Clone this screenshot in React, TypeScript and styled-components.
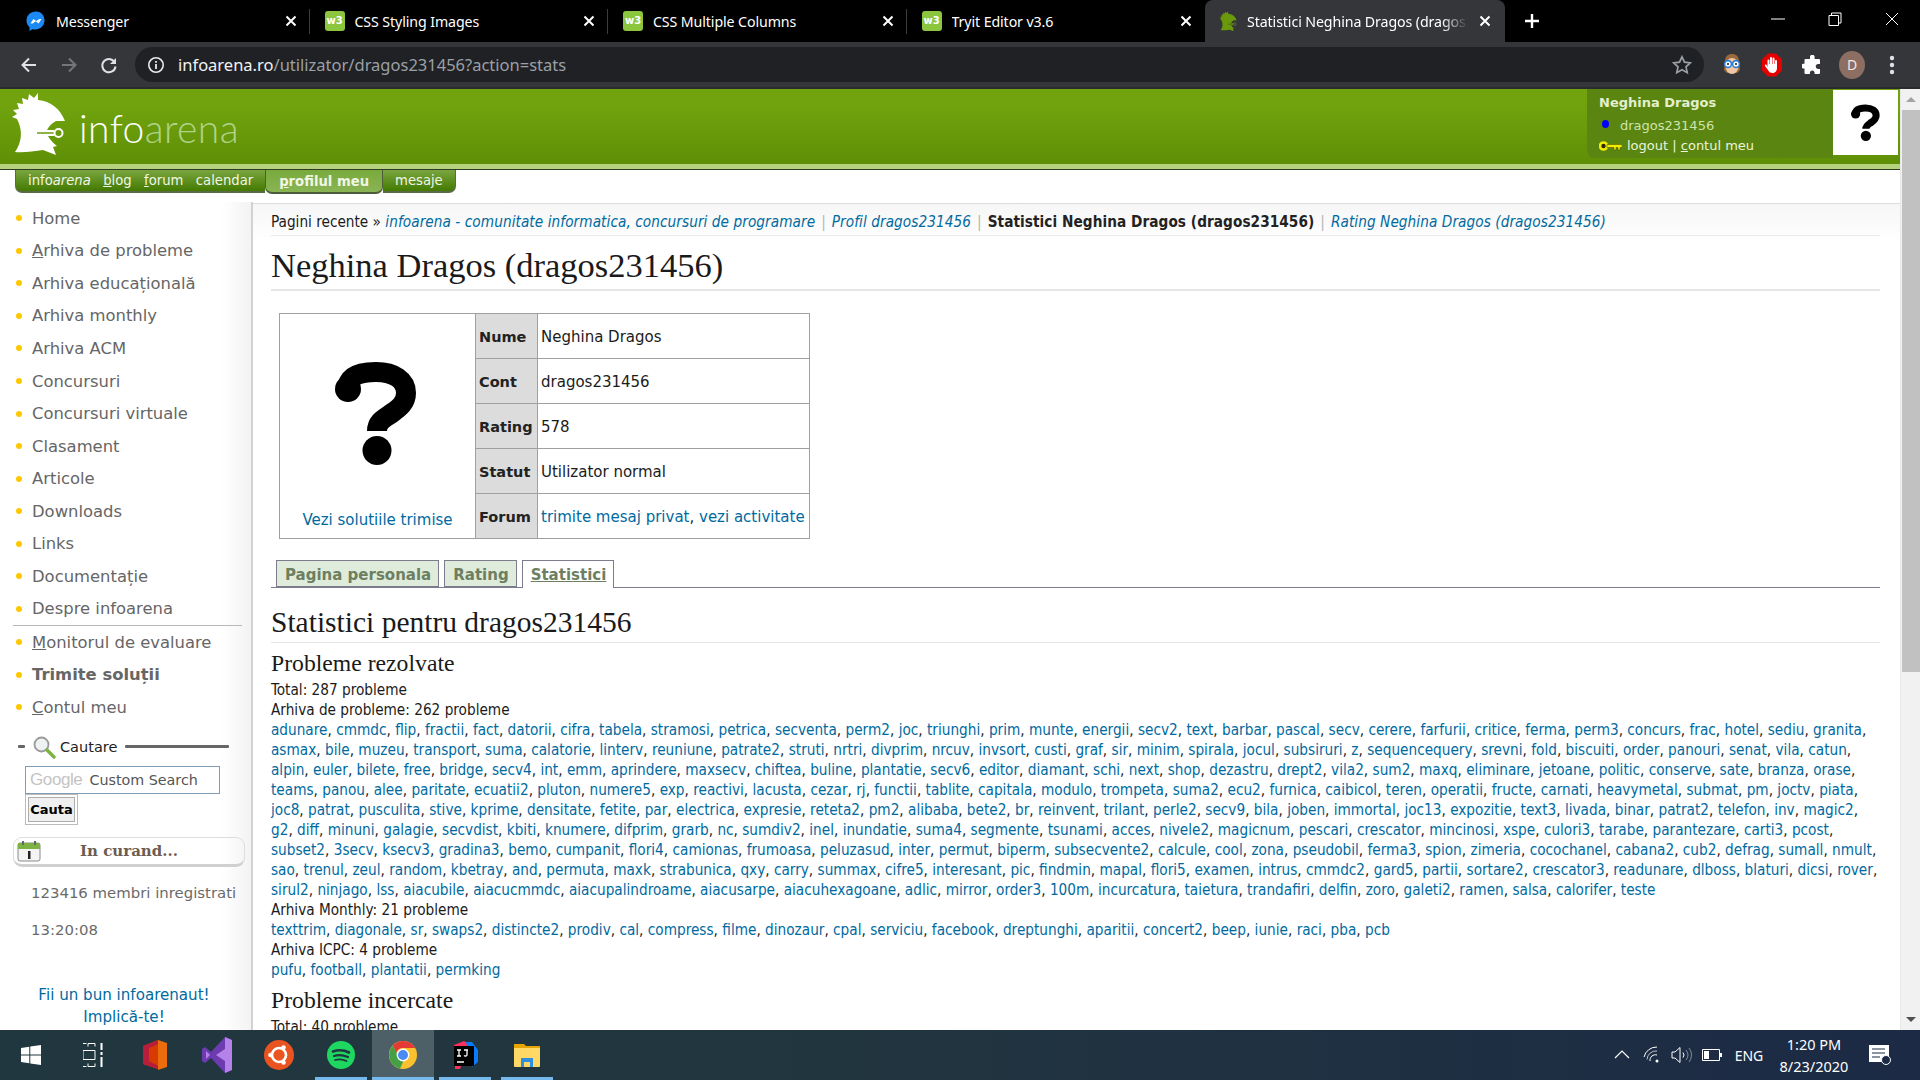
import React from "react";
import styled, { createGlobalStyle } from "styled-components";

const GlobalStyle = createGlobalStyle`
  html, body {
    margin: 0;
    padding: 0;
    height: 100%;
    overflow: hidden;
    background: #fff;
  }
  * { box-sizing: border-box; }
`;

const UI_FONT = `"Noto Sans", "Open Sans", sans-serif`;
const VERDANA = `"DejaVu Sans", Verdana, sans-serif`;
const SERIF = `"Liberation Serif", Georgia, serif`;

const Shell = styled.div`
  width: 1920px;
  height: 1080px;
  display: flex;
  flex-direction: column;
  overflow: hidden;
`;

/* browser chrome */
const TabStrip = styled.div`
  height: 42px;
  flex: none;
  background: #000;
  display: flex;
  align-items: stretch;
  padding-left: 11px;
  font-family: ${UI_FONT};
  font-size: 14px;
  color: #fff;
`;

const Tab = styled.div<{ $active?: boolean }>`
  width: ${p => (p.$active ? "300px" : "298.5px")};
  height: 42px;
  display: flex;
  align-items: center;
  padding: 0 ${p => (p.$active ? "13px" : "12px")} 0 ${p => (p.$active ? "14px" : "15px")};
  gap: 10px;
  background: ${p => (p.$active ? "#35363a" : "transparent")};
  border-radius: ${p => (p.$active ? "8px 8px 0 0" : "0")};
  position: relative;
  ${p =>
    !p.$active &&
    `&::after {
      content: "";
      position: absolute;
      right: 0;
      top: 9px;
      height: 25px;
      width: 1px;
      background: #3d3d3d;
    }`}
  &:nth-child(4)::after {
    display: none;
  }
`;

const TabTitle = styled.span<{ $fade?: boolean }>`
  flex: 1;
  white-space: nowrap;
  overflow: hidden;
  font-size: 14.2px;
  letter-spacing: -0.1px;
  ${p =>
    p.$fade &&
    `-webkit-mask-image: linear-gradient(90deg, #000 88%, transparent 100%);
     mask-image: linear-gradient(90deg, #000 88%, transparent 100%);`}
`;

const W3Icon = styled.span`
  width: 20px;
  height: 20px;
  flex: none;
  border-radius: 3px;
  background: #8cc63f;
  color: #fff;
  font: bold 10px/20px ${VERDANA};
  text-align: center;
`;

const NewTab = styled.div`
  width: 54px;
  display: flex;
  align-items: center;
  justify-content: center;
`;

const WindowButtons = styled.div`
  margin-left: auto;
  display: flex;
  align-items: flex-start;
`;

const WindowButton = styled.div`
  width: 57px;
  height: 38px;
  display: flex;
  align-items: center;
  justify-content: center;
`;

const Toolbar = styled.div`
  height: 47px;
  flex: none;
  background: #35363a;
  border-bottom: 2px solid #2a2b2e;
  display: flex;
  align-items: flex-start;
  padding: 5px 0 0 9px;
`;

const NavIcon = styled.div`
  width: 39px;
  height: 35px;
  margin-right: 1px;
  display: flex;
  align-items: center;
  justify-content: center;
`;

const Omnibox = styled.div`
  width: 1569px;
  height: 35px;
  margin: 0 8px 0 6px;
  border-radius: 18px;
  background: #202124;
  display: flex;
  align-items: center;
  padding: 0 12px;
  font-family: ${UI_FONT};
  font-size: 16.5px;
  color: #9aa0a6;
`;

const UrlHost = styled.span`
  color: #f1f3f4;
`;

const Url = styled.div`
  flex: 1;
  margin-left: 13px;
  white-space: nowrap;
`;

const ExtIcon = styled.div`
  width: 40px;
  height: 35px;
  display: flex;
  align-items: center;
  justify-content: center;
`;

const Avatar = styled.div`
  width: 26px;
  height: 28px;
  border-radius: 50%;
  background: #8d6e63;
  color: #f1e9e6;
  font: 14px/28px ${UI_FONT};
  text-align: center;
`;

/* page */
const Viewport = styled.div`
  flex: 1;
  min-height: 0;
  display: flex;
`;

const Scrollbar = styled.div`
  width: 20px;
  flex: none;
  background: #f1f1f1;
  display: flex;
  flex-direction: column;
  align-items: center;
  border-left: 1px solid #e8e8e8;
`;

const ScrollArrow = styled.div<{ $down?: boolean }>`
  height: 21px;
  flex: none;
  width: 100%;
  display: flex;
  align-items: center;
  justify-content: center;
  &::after {
    content: "";
    border-left: 5px solid transparent;
    border-right: 5px solid transparent;
    ${p =>
      p.$down
        ? "border-top: 5px solid #505050;"
        : "border-bottom: 5px solid #a3a3a3;"}
  }
`;

const ScrollThumb = styled.div`
  width: 18px;
  height: 562px;
  flex: none;
  background: #c1c1c1;
`;

const ScrollTrack = styled.div`
  flex: 1;
`;

const Page = styled.div`
  flex: 1;
  min-width: 0;
  display: flex;
  flex-direction: column;
  background: #fff;
  overflow: hidden;
`;

const Header = styled.div`
  height: 81px;
  flex: none;
  display: flex;
  justify-content: space-between;
  background: linear-gradient(#70a30e 0, #70a30e 20%, #5f8f06 92.5%, #b5d27f 92.5%, #b5d27f 98.7%, #2f3a20 98.7%);
`;

const LogoLink = styled.div`
  display: flex;
  align-items: flex-start;
  padding: 3px 0 0 10px;
`;

const LogoText = styled.div`
  margin: 16px 0 0 13px;
  font-family: Lato, sans-serif;
  font-weight: 300;
  font-size: 39px;
  line-height: 40px;
  color: #fff;
  letter-spacing: 0.4px;
`;

const LogoArena = styled.span`
  color: #b0d38a;
`;

const UserBlock = styled.div`
  display: flex;
  align-items: flex-start;
  padding-right: 2px;
`;

const UserInfo = styled.div`
  width: 246px;
  height: 69px;
  background: #5a8510;
  border-radius: 0 0 0 8px;
  padding: 4px 0 0 12px;
  font-family: ${VERDANA};
  font-size: 13px;
  line-height: 20px;
  color: #cfe3ad;
`;

const UserName = styled.div`
  font-weight: bold;
  color: #e3efcd;
  margin-bottom: 3px;
`;

const UserRow = styled.div`
  display: flex;
  align-items: center;
  gap: 5px;
  height: 20px;
  white-space: nowrap;
`;

const StatusDot = styled.span`
  width: 7px;
  height: 8px;
  margin: -4px 6px 0 3px;
  border-radius: 50%;
  background: #00f;
`;

const HeaderLink = styled.span`
  color: #eaf4d8;
`;

const UserPhoto = styled.div`
  width: 65px;
  height: 65px;
  margin-top: 1px;
  background: #fff;
  display: flex;
  align-items: center;
  justify-content: center;
`;

const NavBar = styled.div`
  height: 33px;
  flex: none;
  padding-left: 15px;
  display: flex;
  align-items: flex-start;
  font-family: ${VERDANA};
  font-size: 13.2px;
  color: #fff;
`;

const NavGroup = styled.div<{ $active?: boolean; $last?: boolean; $first?: boolean }>`
  height: ${p => (p.$active ? "24px" : "23px")};
  display: flex;
  align-items: center;
  gap: 12.4px;
  padding: 0 ${p => (p.$active ? "13px" : p.$last ? "12px" : "12px")};
  background: ${p =>
    p.$active
      ? "linear-gradient(#78aa3c, #8ab454)"
      : "linear-gradient(#7aa540, #437a00)"};
  border: 1px solid #3c4a2c;
  border-top: 0;
  border-left-width: ${p => (p.$last ? "0" : "1px")};
  border-right-width: ${p => (p.$first ? "0" : "1px")};
  border-bottom-width: 2px;
  border-color: ${p => (p.$active ? "#4e5c3e" : "#5a6a46")};
  border-radius: ${p =>
    p.$first ? "0 0 0 7px" : p.$last ? "0 0 7px 0" : "0 0 7px 7px"};
  font-weight: ${p => (p.$active ? "bold" : "normal")};
  color: #f1f6e6;
  white-space: nowrap;
`;

const Body = styled.div`
  flex: 1;
  min-height: 0;
  display: flex;
  margin-top: -1px;
`;

const Sidebar = styled.div`
  width: 253px;
  flex: none;
  border-right: 2px solid #d2d2d2;
  background: linear-gradient(90deg, #fff 88%, #f3f3f3 100%);
  padding: 0 0 0 13px;
  font-family: ${VERDANA};
  font-size: 16.4px;
  color: #666;
`;

const MenuList = styled.ul`
  list-style: none;
  margin: 0;
  padding: 0;
  width: 229px;
`;

const MenuItem = styled.li<{ $strong?: boolean }>`
  height: 32.55px;
  display: flex;
  align-items: center;
  gap: 10px;
  padding-left: 3px;
  font-weight: ${p => (p.$strong ? "bold" : "normal")};
  white-space: nowrap;
  &::before {
    content: "";
    flex: none;
    width: 6px;
    height: 6px;
    border-radius: 50%;
    background: #ffc800;
  }
`;

const MenuDivider = styled.div`
  width: 229px;
  height: 1px;
  background: #b8b8b8;
`;

const SearchTitle = styled.div`
  display: flex;
  align-items: center;
  height: 24px;
  margin: 11px 0 7px 5px;
  font-size: 14.5px;
  color: #222;
`;

const Dash = styled.span<{ $w: number }>`
  width: ${p => p.$w}px;
  height: 3px;
  background: #666;
  border-radius: 1px;
`;

const Glass = styled.svg`
  margin-left: 7px;
`;

const SearchLabel = styled.span`
  margin: 0 8px 0 4px;
`;

const SearchBox = styled.div`
  width: 195px;
  height: 28px;
  margin-left: 12px;
  border: 1px solid #7f9db9;
  display: flex;
  align-items: center;
  padding-left: 4px;
  font-family: ${VERDANA};
  font-size: 14.3px;
  color: #555;
  white-space: nowrap;
`;

const GoogleMark = styled.span`
  font-family: "Liberation Sans", sans-serif;
  font-size: 17px;
  color: #c4c4c4;
  margin-right: 7px;
  letter-spacing: -0.4px;
`;

const SearchButtonWrap = styled.div`
  width: 53px;
  height: 31px;
  margin-left: 12px;
  border: 1px solid #bbb;
  padding: 2px;
`;

const SearchButton = styled.div`
  height: 100%;
  border: 1px solid #adadad;
  background: #f0f0f0;
  font: bold 13px/23px ${VERDANA};
  color: #000;
  text-align: center;
  white-space: nowrap;
  overflow: hidden;
`;

const SoonBox = styled.div`
  width: 232px;
  height: 30px;
  margin-top: 12px;
  border: 1px solid #ddd;
  border-bottom: 3px solid #d0d0d0;
  border-radius: 9px;
  display: flex;
  align-items: center;
  padding-left: 2px;
`;

const SoonLabel = styled.span`
  flex: 1;
  padding-right: 28px;
  text-align: center;
  font-family: "DejaVu Serif", ${SERIF};
  font-size: 15px;
  font-weight: bold;
  color: #6d5c50;
`;

const Counter = styled.div<{ $top: number }>`
  margin: ${p => p.$top}px 0 0 18px;
  font-size: 14.9px;
  line-height: 20px;
  color: #6a6a6a;
  white-space: nowrap;
`;

const Slogan = styled.div`
  margin-top: 44px;
  width: 222px;
  text-align: center;
  font-size: 15.1px;
  line-height: 22.5px;
  color: #006a9f;
`;

const Main = styled.div`
  flex: 1;
  min-width: 0;
  padding: 0 20px 0 18px;
  margin-top: 1px;
  border-top: 1px solid #ddd;
  background: linear-gradient(#f6f6f6, #fff 38px);
  font-family: ${VERDANA};
  color: #1b1b1b;
`;

const Breadcrumb = styled.div`
  height: 32px;
  line-height: 36px;
  border-bottom: 1px solid #eaeaea;
  font-stretch: condensed;
  font-size: 15.2px;
  white-space: nowrap;
`;

const CrumbLink = styled.span`
  font-style: italic;
  color: #006a9f;
  letter-spacing: 0.07px;
`;

const CrumbSep = styled.span`
  color: #b5b5b5;
  margin: 0 6px;
`;

const CrumbCurrent = styled.b`
  color: #222;
  letter-spacing: 0.06px;
`;

const PageTitle = styled.h1`
  margin: 0;
  height: 55px;
  line-height: 59px;
  font-family: ${SERIF};
  font-weight: normal;
  font-size: 34.5px;
  color: #1a1a1a;
  border-bottom: 2px solid #e6e6e6;
  white-space: nowrap;
`;

const ProfileTable = styled.table`
  margin: 22px 0 0 8px;
  border-collapse: collapse;
  table-layout: fixed;
  width: 531px;
  height: 226px;
  font-size: 15px;
  td, th {
    border: 1px solid #a0a0a0;
  }
`;

const PhotoCell = styled.td`
  width: 196px;
  padding: 47px 3px 0 0;
  text-align: center;
  vertical-align: top;
`;

const BigPhoto = styled.div`
  height: 113px;
  display: flex;
  justify-content: center;
`;

const PhotoLink = styled.div`
  margin: 37px -3px 0 0;
  color: #006a9f;
  white-space: nowrap;
`;

const LabelCell = styled.th`
  width: 62px;
  padding: 2px 0 0 3px;
  text-align: left;
  background: #dcdcdc;
  font-size: 14.5px;
  color: #222;
`;

const ValueCell = styled.td`
  padding: 2px 3px 0;
  white-space: nowrap;
`;

const CellLink = styled.span`
  color: #006a9f;
`;

const Tabs = styled.div`
  height: 28px;
  margin-top: 21px;
  padding-left: 5px;
  display: flex;
  gap: 5px;
  border-bottom: 1px solid #7c7c8c;
  font-size: 15px;
  font-weight: bold;
`;

const TabLink = styled.div<{ $active?: boolean }>`
  height: ${p => (p.$active ? "28px" : "27px")};
  padding: 0 7px 0 8px;
  line-height: 29px;
  border: 1px solid #7c7c8c;
  border-bottom: ${p => (p.$active ? "0" : "1px solid #7c7c8c")};
  background: ${p => (p.$active ? "#fff" : "#dfecdc")};
  color: #6d7f60;
  text-decoration: ${p => (p.$active ? "underline" : "none")};
  white-space: nowrap;
`;

const SectionTitle = styled.h2`
  margin: 16px 0 0;
  height: 39px;
  line-height: 37px;
  font-family: ${SERIF};
  font-weight: normal;
  font-size: 29.5px;
  color: #1a1a1a;
  border-bottom: 1px solid #e6e6e6;
`;

const SubTitle = styled.h3<{ $top: number }>`
  margin: ${p => p.$top}px 0 0;
  height: 26px;
  line-height: 26px;
  font-family: ${SERIF};
  font-weight: normal;
  font-size: 23.7px;
  color: #1a1a1a;
`;

const Line = styled.div<{ $top?: number }>`
  height: 20px;
  margin-top: ${p => p.$top || 0}px;
  line-height: 20px;
  font-stretch: condensed;
  font-size: 15.2px;
  white-space: nowrap;
  color: #1b1b1b;
`;

const ProblemLink = styled.span`
  color: #006a9f;
`;

/* taskbar */
const Taskbar = styled.div`
  height: 50px;
  flex: none;
  display: flex;
  align-items: stretch;
  background: linear-gradient(90deg, #21373f 0, #21353f 45%, #1c2a45 100%);
  color: #fff;
  font-family: ${UI_FONT};
`;

const TaskSlot = styled.div<{ $running?: boolean; $focus?: boolean }>`
  width: 62px;
  position: relative;
  display: flex;
  align-items: center;
  justify-content: center;
  background: ${p => (p.$focus ? "#4d6068" : "transparent")};
  ${p =>
    p.$running &&
    `&::after {
      content: "";
      position: absolute;
      left: 5px;
      right: 5px;
      bottom: 0;
      height: 3px;
      background: #76b9ed;
    }`}
  ${p => p.$focus && `&::after { left: 0; right: 0; }`}
`;

const Tray = styled.div`
  margin-left: auto;
  display: flex;
  align-items: center;
`;

const TrayIcon = styled.div`
  width: 30px;
  display: flex;
  justify-content: center;
`;

const TrayLang = styled.div`
  width: 38px;
  margin-left: 3px;
  font-size: 14px;
  text-align: center;
`;

const Clock = styled.div`
  width: 92px;
  font-size: 14.5px;
  line-height: 22px;
  text-align: center;
`;

const Notify = styled.div`
  width: 40px;
  margin-right: 20px;
  display: flex;
  justify-content: center;
`;

const QuestionMark: React.FC<{ w: number; h: number }> = ({ w, h }) => (
  <svg width={w} height={h} viewBox="0 0 82 104">
    <path
      d="M12 30C12 15 24 11 41 11c18 0 30 8 30 21 0 10-7 15-14 20-7 5-15 8-15 18"
      fill="none"
      stroke="#000"
      strokeWidth="20"
    />
    <circle cx="13" cy="28" r="13" fill="#000" />
    <circle cx="42" cy="89.5" r="14.5" fill="#000" />
  </svg>
);

const Helmet: React.FC<{ size?: number; color?: string; ring?: string }> = ({
  size = 56,
  color = "#fff",
  ring = "#6a9a0b",
}) => (
  <svg width={size} height={(size * 64) / 56} viewBox="0 0 56 64">
    <path
      fill={color}
      d="M7 27 L2 25 L7 22 L3 18 L9 17 L7 11 L13 12 L12 6 L18 8 L19 2 L24 6 L28 1 L28 8 C41 9 50 17 55 29 L46 29 C42 31 39 34 37 38 C36 44 42 50 47 54 L43 55 L46 63 L33 58 C24 59 14 61 5 60 C12 50 13 38 7 27 Z"
    />
    <path d="M27 41 H44" stroke={color} strokeWidth="6" fill="none" />
    <path d="M27 41 H44" stroke={ring} strokeWidth="1.5" fill="none" />
    <circle cx="48.5" cy="41" r="4" fill="none" stroke={color} strokeWidth="2" />
  </svg>
);

const Messenger = () => (
  <svg width="20" height="20" viewBox="0 0 20 20">
    <path
      fill="#1b8af5"
      d="M10 0.5C4.6 0.5 0.5 4.4 0.5 9.6c0 2.7 1.1 5 3 6.6V20l3-1.7c.8.2 1.6.3 2.5.3 5.4 0 9.5-3.9 9.5-9S15.4.5 10 .5z"
    />
    <path fill="#fff" d="M4.5 12.4 7.4 7.9l2.9 2.2 3-2.2 2.2 0-2.9 4.5-2.9-2.2-3 2.2z" />
  </svg>
);

const ChromeLogo = () => (
  <svg width="28" height="28" viewBox="0 0 28 28">
    <circle cx="14" cy="14" r="14" fill="#fbc02d" />
    <path fill="#e53935" d="M14 0a14 14 0 0 1 12.1 7H14a7 7 0 0 0-6.5 4.4L3.7 4.8A14 14 0 0 1 14 0z" />
    <path fill="#43a047" d="M3.7 4.8l6.1 10.6a5 5 0 0 0 5 3.6L11 27.7A14 14 0 0 1 3.7 4.8z" />
    <circle cx="14" cy="14" r="6.4" fill="#fff" />
    <circle cx="14" cy="14" r="5" fill="#4a8af4" />
  </svg>
);

const TABS = ["CSS Styling Images", "CSS Multiple Columns", "Tryit Editor v3.6"];

const MENU_A: React.ReactNode[] = [
  "Home",
  <span>
    <u>A</u>rhiva de probleme
  </span>,
  "Arhiva educațională",
  "Arhiva monthly",
  "Arhiva ACM",
  "Concursuri",
  "Concursuri virtuale",
  "Clasament",
  "Articole",
  "Downloads",
  "Links",
  "Documentație",
  "Despre infoarena",
];

const SOLVED = [
  "adunare, cmmdc, flip, fractii, fact, datorii, cifra, tabela, stramosi, petrica, secventa, perm2, joc, triunghi, prim, munte, energii, secv2, text, barbar, pascal, secv, cerere, farfurii, critice, ferma, perm3, concurs, frac, hotel, sediu, granita,",
  "asmax, bile, muzeu, transport, suma, calatorie, linterv, reuniune, patrate2, struti, nrtri, divprim, nrcuv, invsort, custi, graf, sir, minim, spirala, jocul, subsiruri, z, sequencequery, srevni, fold, biscuiti, order, panouri, senat, vila, catun,",
  "alpin, euler, bilete, free, bridge, secv4, int, emm, aprindere, maxsecv, chiftea, buline, plantatie, secv6, editor, diamant, schi, next, shop, dezastru, drept2, vila2, sum2, maxq, eliminare, jetoane, politic, conserve, sate, branza, orase,",
  "teams, panou, alee, paritate, ecuatii2, pluton, numere5, exp, reactivi, lacusta, cezar, rj, functii, tablite, capitala, modulo, trompeta, suma2, ecu2, furnica, caibicol, teren, operatii, fructe, carnati, heavymetal, submat, pm, joctv, piata,",
  "joc8, patrat, pusculita, stive, kprime, densitate, fetite, par, electrica, expresie, reteta2, pm2, alibaba, bete2, br, reinvent, trilant, perle2, secv9, bila, joben, immortal, joc13, expozitie, text3, livada, binar, patrat2, telefon, inv, magic2,",
  "g2, diff, minuni, galagie, secvdist, kbiti, knumere, difprim, grarb, nc, sumdiv2, inel, inundatie, suma4, segmente, tsunami, acces, nivele2, magicnum, pescari, crescator, mincinosi, xspe, culori3, tarabe, parantezare, carti3, pcost,",
  "subset2, 3secv, ksecv3, gradina3, bemo, cumpanit, flori4, camionas, frumoasa, peluzasud, inter, permut, biperm, subsecvente2, calcule, cool, zona, pseudobil, ferma3, spion, zimeria, cocochanel, cabana2, cub2, defrag, sumall, nmult,",
  "sao, trenul, zeul, random, kbetray, and, permuta, maxk, strabunica, qxy, carry, summax, cifre5, interesant, pic, findmin, mapal, flori5, examen, intrus, cmmdc2, gard5, partii, sortare2, crescator3, readunare, dlboss, blaturi, dicsi, rover,",
  "sirul2, ninjago, lss, aiacubile, aiacucmmdc, aiacupalindroame, aiacusarpe, aiacuhexagoane, adlic, mirror, order3, 100m, incurcatura, taietura, trandafiri, delfin, zoro, galeti2, ramen, salsa, calorifer, teste",
];

const MONTHLY =
  "texttrim, diagonale, sr, swaps2, distincte2, prodiv, cal, compress, filme, dinozaur, cpal, serviciu, facebook, dreptunghi, aparitii, concert2, beep, iunie, raci, pba, pcb";
const ICPC = "pufu, football, plantatii, permking";

const ProblemLine: React.FC<{ text: string }> = ({ text }) => {
  const trailing = text.endsWith(",");
  const words = text.replace(/,$/, "").split(", ");
  return (
    <Line>
      {words.map((w, i) => (
        <React.Fragment key={w + i}>
          <ProblemLink>{w}</ProblemLink>
          {i < words.length - 1 ? ", " : trailing ? "," : ""}
        </React.Fragment>
      ))}
    </Line>
  );
};

const Stroke: React.FC<{ d: string; w?: number; c?: string; s?: number; sw?: number }> = ({
  d,
  w = 24,
  c = "#fff",
  s = 24,
  sw = 2,
}) => (
  <svg width={w} height={w} viewBox={`0 0 ${s} ${s}`} fill="none" stroke={c} strokeWidth={sw}>
    <path d={d} />
  </svg>
);

const App: React.FC = () => {
  return (
    <Shell>
      <GlobalStyle />
      <TabStrip>
        <Tab>
          <Messenger />
          <TabTitle>Messenger</TabTitle>
          <Stroke w={14} s={14} d="M2.5 2.5l9 9M11.5 2.5l-9 9" />
        </Tab>
        {TABS.map(t => (
          <Tab key={t}>
            <W3Icon>w3</W3Icon>
            <TabTitle>{t}</TabTitle>
            <Stroke w={14} s={14} d="M2.5 2.5l9 9M11.5 2.5l-9 9" />
          </Tab>
        ))}
        <Tab $active>
          <Helmet size={18} color="#6a9a0b" ring="#35363a" />
          <TabTitle $fade>Statistici Neghina Dragos (dragos231456)</TabTitle>
          <Stroke w={14} s={14} d="M2.5 2.5l9 9M11.5 2.5l-9 9" />
        </Tab>
        <NewTab>
          <Stroke w={18} s={18} sw={2.4} d="M9 2v14M2 9h14" />
        </NewTab>
        <WindowButtons>
          <WindowButton>
            <Stroke w={14} s={14} sw={1} d="M0 7h14" />
          </WindowButton>
          <WindowButton>
            <Stroke w={14} s={14} sw={1} d="M1 3.5h9.5v10H1zM3.5 3.5V1H13v10h-2.5" />
          </WindowButton>
          <WindowButton>
            <Stroke w={14} s={14} sw={1} d="M1 1l12 12M13 1L1 13" />
          </WindowButton>
        </WindowButtons>
      </TabStrip>

      <Toolbar>
        <NavIcon>
          <Stroke w={20} s={20} d="M17 10H4M10 3.5L3.5 10l6.5 6.5" c="#dee1e6" />
        </NavIcon>
        <NavIcon>
          <Stroke w={20} s={20} d="M3 10h13M10 3.5l6.5 6.5-6.5 6.5" c="#74767a" />
        </NavIcon>
        <NavIcon>
          <svg width="20" height="20" viewBox="0 0 20 20" fill="none">
            <path d="M16 8A6.6 6.6 0 1 0 16.5 11.5" stroke="#dee1e6" strokeWidth="2" />
            <path d="M17 3v6h-6z" fill="#dee1e6" />
          </svg>
        </NavIcon>
        <Omnibox>
          <svg width="18" height="18" viewBox="0 0 18 18" fill="none">
            <circle cx="9" cy="9" r="7.2" stroke="#e8eaed" strokeWidth="1.6" />
            <path d="M9 8v5M9 5v1.8" stroke="#e8eaed" strokeWidth="1.8" />
          </svg>
          <Url>
            <UrlHost>infoarena.ro</UrlHost>/utilizator/dragos231456?action=stats
          </Url>
          <svg width="20" height="20" viewBox="0 0 20 20" fill="none">
            <path
              d="M10 1.8l2.5 5.4 5.8.7-4.3 4 1.2 5.8L10 14.8l-5.2 2.9L6 11.9l-4.3-4 5.8-.7z"
              stroke="#9aa0a6"
              strokeWidth="1.7"
            />
          </svg>
        </Omnibox>
        <ExtIcon>
          <svg width="20" height="24" viewBox="0 0 20 24">
            <path d="M3 9C3 3 6 1 10 1s7 2 7 8l1 8-3 3H5l-3-3z" fill="#9a6a3c" />
            <ellipse cx="10" cy="13" rx="6.5" ry="8" fill="#f0c6a4" />
            <circle cx="6" cy="11" r="3.4" fill="#fff" stroke="#2d7fd6" strokeWidth="1.6" />
            <circle cx="14" cy="11" r="3.4" fill="#fff" stroke="#2d7fd6" strokeWidth="1.6" />
            <circle cx="6" cy="11" r="1.1" fill="#223" />
            <circle cx="14" cy="11" r="1.1" fill="#223" />
          </svg>
        </ExtIcon>
        <ExtIcon>
          <svg width="20" height="24" viewBox="0 0 20 24">
            <path d="M6 0.5h8l6 6v11l-6 6H6l-6-6v-11z" fill="#e60000" />
            <path
              fill="#fff"
              d="M5.5 14V7.5a1 1 0 0 1 2 0V11h.5V5a1 1 0 0 1 2 0v6h.5V5.5a1 1 0 0 1 2 0V11h.5V8a1 1 0 0 1 2 0v7c0 3-2 5-4.5 5S7 19 6 17l-3-4c-.5-1 .8-2 1.6-1.1z"
            />
          </svg>
        </ExtIcon>
        <ExtIcon>
          <svg width="20" height="20" viewBox="0 0 20 20">
            <path
              fill="#fff"
              d="M8 1.5a2.4 2.4 0 0 1 4.6 0V4H17a1 1 0 0 1 1 1v4h-1.8a2.5 2.5 0 0 0 0 5H18v4a1 1 0 0 1-1 1h-4.4v-1.6a2.4 2.4 0 0 0-4.7 0V19H3.5a1 1 0 0 1-1-1v-4.5H1a2.5 2.5 0 0 1 0-4.8h1.5V5a1 1 0 0 1 1-1H8z"
            />
          </svg>
        </ExtIcon>
        <ExtIcon>
          <Avatar>D</Avatar>
        </ExtIcon>
        <ExtIcon>
          <svg width="6" height="20" viewBox="0 0 6 20" fill="#dee1e6">
            <circle cx="3" cy="3" r="2.2" />
            <circle cx="3" cy="10" r="2.2" />
            <circle cx="3" cy="17" r="2.2" />
          </svg>
        </ExtIcon>
      </Toolbar>

      <Viewport>
        <Page>
          <Header>
            <LogoLink>
              <Helmet />
              <LogoText>
                info<LogoArena>arena</LogoArena>
              </LogoText>
            </LogoLink>
            <UserBlock>
              <UserInfo>
                <UserName>Neghina Dragos</UserName>
                <UserRow>
                  <StatusDot />
                  dragos231456
                </UserRow>
                <UserRow>
                  <svg width="23" height="11" viewBox="0 0 23 11">
                    <circle cx="4.5" cy="5" r="3.5" fill="#2a2a00" stroke="#f2ee00" strokeWidth="2.6" />
                    <path d="M8 3.5h15v3h-2V9h-2V6.5h-2V9h-2V6.5H8z" fill="#f2ee00" stroke="#4a4a00" strokeWidth=".5" />
                  </svg>
                  <HeaderLink>
                    logout | <u>c</u>ontul meu
                  </HeaderLink>
                </UserRow>
              </UserInfo>
              <UserPhoto>
                <QuestionMark w={29} h={37} />
              </UserPhoto>
            </UserBlock>
          </Header>

          <NavBar>
            <NavGroup $first>
              <span>
                info<i>arena</i>
              </span>
              <span>
                <u>b</u>log
              </span>
              <span>
                <u>f</u>orum
              </span>
              <span>calendar</span>
            </NavGroup>
            <NavGroup $active>
              <span>
                <u>p</u>rofilul meu
              </span>
            </NavGroup>
            <NavGroup $last>
              <span>mesaje</span>
            </NavGroup>
          </NavBar>

          <Body>
            <Sidebar>
              <MenuList>
                {MENU_A.map((m, i) => (
                  <MenuItem key={i}>{m}</MenuItem>
                ))}
              </MenuList>
              <MenuDivider />
              <MenuList>
                <MenuItem>
                  <span>
                    <u>M</u>onitorul de evaluare
                  </span>
                </MenuItem>
                <MenuItem $strong>Trimite soluții</MenuItem>
                <MenuItem>
                  <span>
                    <u>C</u>ontul meu
                  </span>
                </MenuItem>
              </MenuList>
              <SearchTitle>
                <Dash $w={7} />
                <Glass width="24" height="24" viewBox="0 0 24 24">
                  <circle cx="9.5" cy="9.5" r="7" fill="#eef2f2" stroke="#9a9a9a" strokeWidth="1.8" />
                  <path d="M15 15l7 7" stroke="#7cb342" strokeWidth="3.4" strokeLinecap="round" />
                </Glass>
                <SearchLabel>Cautare</SearchLabel>
                <Dash $w={104} />
              </SearchTitle>
              <SearchBox>
                <GoogleMark>Google</GoogleMark>
                Custom Search
              </SearchBox>
              <SearchButtonWrap>
                <SearchButton>Cauta</SearchButton>
              </SearchButtonWrap>
              <SoonBox>
                <svg width="26" height="24" viewBox="0 0 26 24">
                  <rect x="2" y="4" width="22" height="18" rx="2" fill="#f4f4f4" stroke="#8a8a8a" />
                  <rect x="2" y="4" width="22" height="6" fill="#7cb342" />
                  <path d="M7 2v4M19 2v4" stroke="#666" strokeWidth="2" />
                  <rect x="12" y="12" width="2.5" height="8" fill="#222" />
                </svg>
                <SoonLabel>In curand...</SoonLabel>
              </SoonBox>
              <Counter $top={16}>123416 membri inregistrati</Counter>
              <Counter $top={17}>13:20:08</Counter>
              <Slogan>
                Fii un bun infoarenaut!
                <br />
                Implică-te!
              </Slogan>
            </Sidebar>

            <Main>
              <Breadcrumb>
                Pagini recente »{" "}
                <CrumbLink>infoarena - comunitate informatica, concursuri de programare</CrumbLink>
                <CrumbSep>|</CrumbSep>
                <CrumbLink>Profil dragos231456</CrumbLink>
                <CrumbSep>|</CrumbSep>
                <CrumbCurrent>Statistici Neghina Dragos (dragos231456)</CrumbCurrent>
                <CrumbSep>|</CrumbSep>
                <CrumbLink>Rating Neghina Dragos (dragos231456)</CrumbLink>
              </Breadcrumb>
              <PageTitle>Neghina Dragos (dragos231456)</PageTitle>

              <ProfileTable>
                <tbody>
                  <tr>
                    <PhotoCell rowSpan={5}>
                      <BigPhoto>
                        <QuestionMark w={82} h={104} />
                      </BigPhoto>
                      <PhotoLink>Vezi solutiile trimise</PhotoLink>
                    </PhotoCell>
                    <LabelCell>Nume</LabelCell>
                    <ValueCell>Neghina Dragos</ValueCell>
                  </tr>
                  <tr>
                    <LabelCell>Cont</LabelCell>
                    <ValueCell>dragos231456</ValueCell>
                  </tr>
                  <tr>
                    <LabelCell>Rating</LabelCell>
                    <ValueCell>578</ValueCell>
                  </tr>
                  <tr>
                    <LabelCell>Statut</LabelCell>
                    <ValueCell>Utilizator normal</ValueCell>
                  </tr>
                  <tr>
                    <LabelCell>Forum</LabelCell>
                    <ValueCell>
                      <CellLink>trimite mesaj privat</CellLink>, <CellLink>vezi activitate</CellLink>
                    </ValueCell>
                  </tr>
                </tbody>
              </ProfileTable>

              <Tabs>
                <TabLink>Pagina personala</TabLink>
                <TabLink>Rating</TabLink>
                <TabLink $active>Statistici</TabLink>
              </Tabs>

              <SectionTitle>Statistici pentru dragos231456</SectionTitle>
              <SubTitle $top={7}>Probleme rezolvate</SubTitle>
              <Line $top={4}>Total: 287 probleme</Line>
              <Line>Arhiva de probleme: 262 probleme</Line>
              {SOLVED.map(l => (
                <ProblemLine key={l} text={l} />
              ))}
              <Line>Arhiva Monthly: 21 probleme</Line>
              <ProblemLine text={MONTHLY} />
              <Line>Arhiva ICPC: 4 probleme</Line>
              <ProblemLine text={ICPC} />
              <SubTitle $top={7}>Probleme incercate</SubTitle>
              <Line $top={4}>Total: 40 probleme</Line>
            </Main>
          </Body>
        </Page>
        <Scrollbar>
          <ScrollArrow />
          <ScrollThumb />
          <ScrollTrack />
          <ScrollArrow $down />
        </Scrollbar>
      </Viewport>

      <Taskbar>
        <TaskSlot>
          <svg width="20" height="20" viewBox="0 0 20 20" fill="#fff">
            <path d="M0 3l8.3-1.2v7.7H0zM9.3 1.6L20 0v9.5H9.3zM0 10.5h8.3v7.7L0 17zM9.3 10.5H20V20L9.3 18.4z" />
          </svg>
        </TaskSlot>
        <TaskSlot>
          <svg width="20" height="24" viewBox="0 0 20 24" fill="none" stroke="#fff">
            <path d="M0 .5h3.5M5 .5h7M5 .5v3M12 .5v3M0 7.5h12v9H0zM0 23.5h3.5M5 23.5h7M5 20.5v3M12 20.5v3" />
            <path d="M18.5 0v7M18.5 9v3M18.5 14v10" strokeWidth="2" />
          </svg>
        </TaskSlot>
        <TaskSlot>
          <svg width="24" height="30" viewBox="0 0 24 30">
            <path d="M0 6L15 0v29L0 24z" fill="#d83b01" />
            <path d="M15 0l9 3v24l-9 3z" fill="#eb6c0c" />
            <path d="M0 6l15-6v4L6 8v13l9 5v3L0 24z" fill="#b81e3c" />
          </svg>
        </TaskSlot>
        <TaskSlot>
          <svg width="30" height="36" viewBox="0 0 30 36">
            <path d="M0 12l3-2 6 5L23 0l7 3v30l-7 3-14-15-6 5-3-2z" fill="#6c3bb0" />
            <path d="M23 0l7 3v30l-7 3V24l-9-6 9-6z" fill="#b482e8" />
            <path d="M4 14v8l4-4z" fill="#b482e8" />
          </svg>
        </TaskSlot>
        <TaskSlot>
          <svg width="30" height="30" viewBox="0 0 30 30">
            <circle cx="15" cy="15" r="15" fill="#e95420" />
            <circle cx="15" cy="15" r="7" fill="none" stroke="#fff" strokeWidth="2.6" />
            <circle cx="6.5" cy="15" r="2.3" fill="#fff" />
            <circle cx="19.5" cy="7.5" r="2.3" fill="#fff" />
            <circle cx="19.5" cy="22.5" r="2.3" fill="#fff" />
          </svg>
        </TaskSlot>
        <TaskSlot $running>
          <svg width="28" height="28" viewBox="0 0 28 28" fill="none" stroke="#21353f" strokeLinecap="round">
            <circle cx="14" cy="14" r="14" fill="#1ed760" stroke="none" />
            <path d="M6 10.5c6-2 11-1.5 16 1" strokeWidth="2.6" />
            <path d="M7 15c5-1.5 9-1 14 1" strokeWidth="2.2" />
            <path d="M8 19c4-1 8-.8 11.5 1" strokeWidth="1.8" />
          </svg>
        </TaskSlot>
        <TaskSlot $running $focus>
          <ChromeLogo />
        </TaskSlot>
        <TaskSlot $running>
          <svg width="26" height="28" viewBox="0 0 26 28">
            <path d="M2 4l10-4 5 3-9 25H3z" fill="#fe315d" />
            <path d="M14 1l6 0 6 8v12l-6 5z" fill="#087cfa" />
            <rect x="2" y="5" width="20" height="20" fill="#000" />
            <path d="M5 9h4M7 9v6M5 15h4M12 9h4M15 9v5c0 1-2 1.5-3 .5M5 21h7" stroke="#fff" strokeWidth="1.3" fill="none" />
          </svg>
        </TaskSlot>
        <TaskSlot $running>
          <svg width="28" height="26" viewBox="0 0 28 26">
            <path d="M1 2h10l2 2h14v20H1z" fill="#e8a500" />
            <path d="M1 6h26v18a1 1 0 0 1-1 1H2a1 1 0 0 1-1-1z" fill="#ffd866" />
            <path d="M8 25v-9h12v9h-3v-5h-6v5z" fill="#2f8ee0" />
          </svg>
        </TaskSlot>
        <Tray>
          <TrayIcon>
            <Stroke w={18} s={18} sw={1.2} d="M2 12l7-7 7 7" />
          </TrayIcon>
          <TrayIcon>
            <svg width="18" height="18" viewBox="0 0 18 18" fill="none" stroke="#fff" strokeWidth="1">
              <path d="M1 11A13 13 0 0 1 14 1" />
              <path d="M4 13.5A9 9 0 0 1 14 5" opacity=".7" />
              <path d="M7 15A5.5 5.5 0 0 1 14 9" />
              <circle cx="14" cy="15" r="1.5" fill="#fff" stroke="none" />
            </svg>
          </TrayIcon>
          <TrayIcon>
            <svg width="22" height="18" viewBox="0 0 22 18" fill="none" stroke="#fff">
              <path d="M1 6h3l5-4.5v15L4 12H1z" />
              <path d="M12 6.5a4 4 0 0 1 0 5" />
              <path d="M15 4a8 8 0 0 1 0 10M18 2a11 11 0 0 1 0 14" opacity=".45" />
            </svg>
          </TrayIcon>
          <TrayIcon>
            <svg width="20" height="12" viewBox="0 0 20 12" fill="none" stroke="#fff">
              <path d="M.5.5h17v11H.5z" />
              <rect x="2" y="2" width="5" height="8" fill="#fff" stroke="none" />
              <rect x="18" y="4" width="2" height="4" fill="#fff" stroke="none" />
            </svg>
          </TrayIcon>
          <TrayLang>ENG</TrayLang>
          <Clock>
            1:20 PM
            <br />
            8/23/2020
          </Clock>
          <Notify>
            <svg width="22" height="20" viewBox="0 0 22 20">
              <path d="M0 0h20v17H0z" fill="#fff" />
              <path d="M3 4h13M3 8h13M3 12h8" stroke="#1c2a45" strokeWidth="1.2" />
              <circle cx="17" cy="15" r="4.5" fill="#1c2a45" stroke="#fff" />
            </svg>
          </Notify>
        </Tray>
      </Taskbar>
    </Shell>
  );
};

export default App;
